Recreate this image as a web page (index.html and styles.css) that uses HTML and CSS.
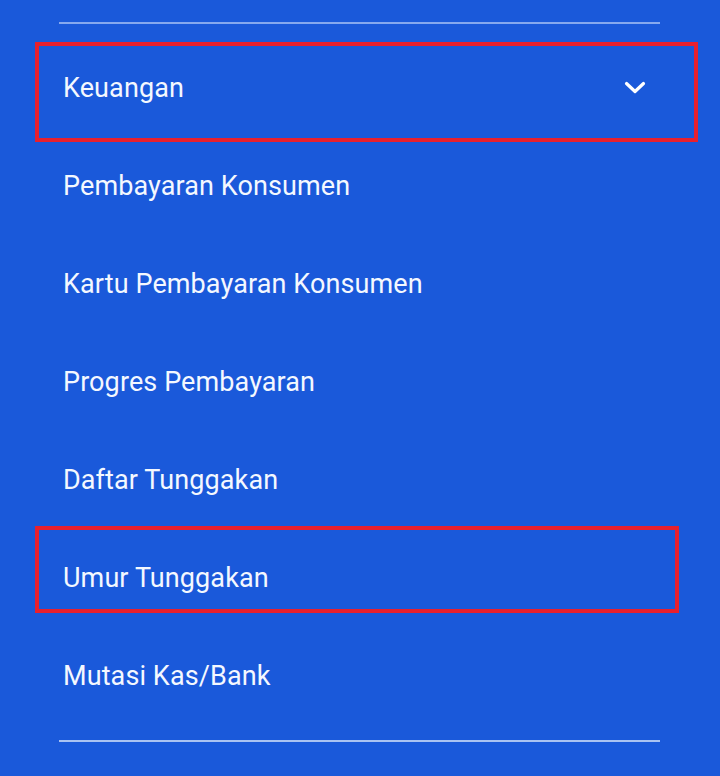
FILE: index.html
```html
<!DOCTYPE html>
<html>
<head>
<meta charset="utf-8">
<link rel="stylesheet" href="styles.css">
</head>
<body>
<div class="menu">
  <div class="divider"></div>
  <ul class="list">
    <li class="item header">
      <span>Keuangan</span>
      <svg class="chev" width="24" height="24" viewBox="0 0 24 24"><path d="M3.5 7.5l8.5 8 8.5-8" fill="none" stroke="#fff" stroke-width="3.2" stroke-linecap="round" stroke-linejoin="round"/></svg>
      <div class="mark mark-a"></div>
    </li>
    <li class="item">Pembayaran Konsumen</li>
    <li class="item">Kartu Pembayaran Konsumen</li>
    <li class="item">Progres Pembayaran</li>
    <li class="item">Daftar Tunggakan</li>
    <li class="item">Umur Tunggakan<div class="mark mark-b"></div></li>
    <li class="item">Mutasi Kas/Bank</li>
  </ul>
  <div class="divider bottom"></div>
</div>
</body>
</html>
```
FILE: styles.css
```css
html, body {
  margin: 0;
  padding: 0;
  background: #1a59da;
  height: 776px;
  overflow: hidden;
}
.menu {
  padding-top: 22px;
  font-family: Roboto, "Noto Sans", sans-serif;
  color: #f4f8ff;
}
.divider {
  height: 2px;
  margin: 0 60px 0 59px;
  background: #86a9ef;
}
.divider.bottom {
  background: #a9c3f2;
  height: 1.5px;
}
.list {
  list-style: none;
  margin: 15px 0 15px 0;
  padding: 0;
}
.item {
  position: relative;
  height: 98px;
  display: flex;
  align-items: center;
  padding-left: 63px;
  padding-right: 73px;
  font-size: 27px;
  letter-spacing: 0.1px;
}
.header {
  justify-content: space-between;
}
.chev {
  width: 24px;
  height: 24px;
}
.mark {
  position: absolute;
  border: 4px solid #e8202e;
  box-sizing: border-box;
  pointer-events: none;
}
.mark-a {
  left: 35px;
  top: 3px;
  width: 663px;
  height: 100px;
}
.mark-b {
  left: 35px;
  top: -3px;
  width: 644px;
  height: 87px;
}
```
